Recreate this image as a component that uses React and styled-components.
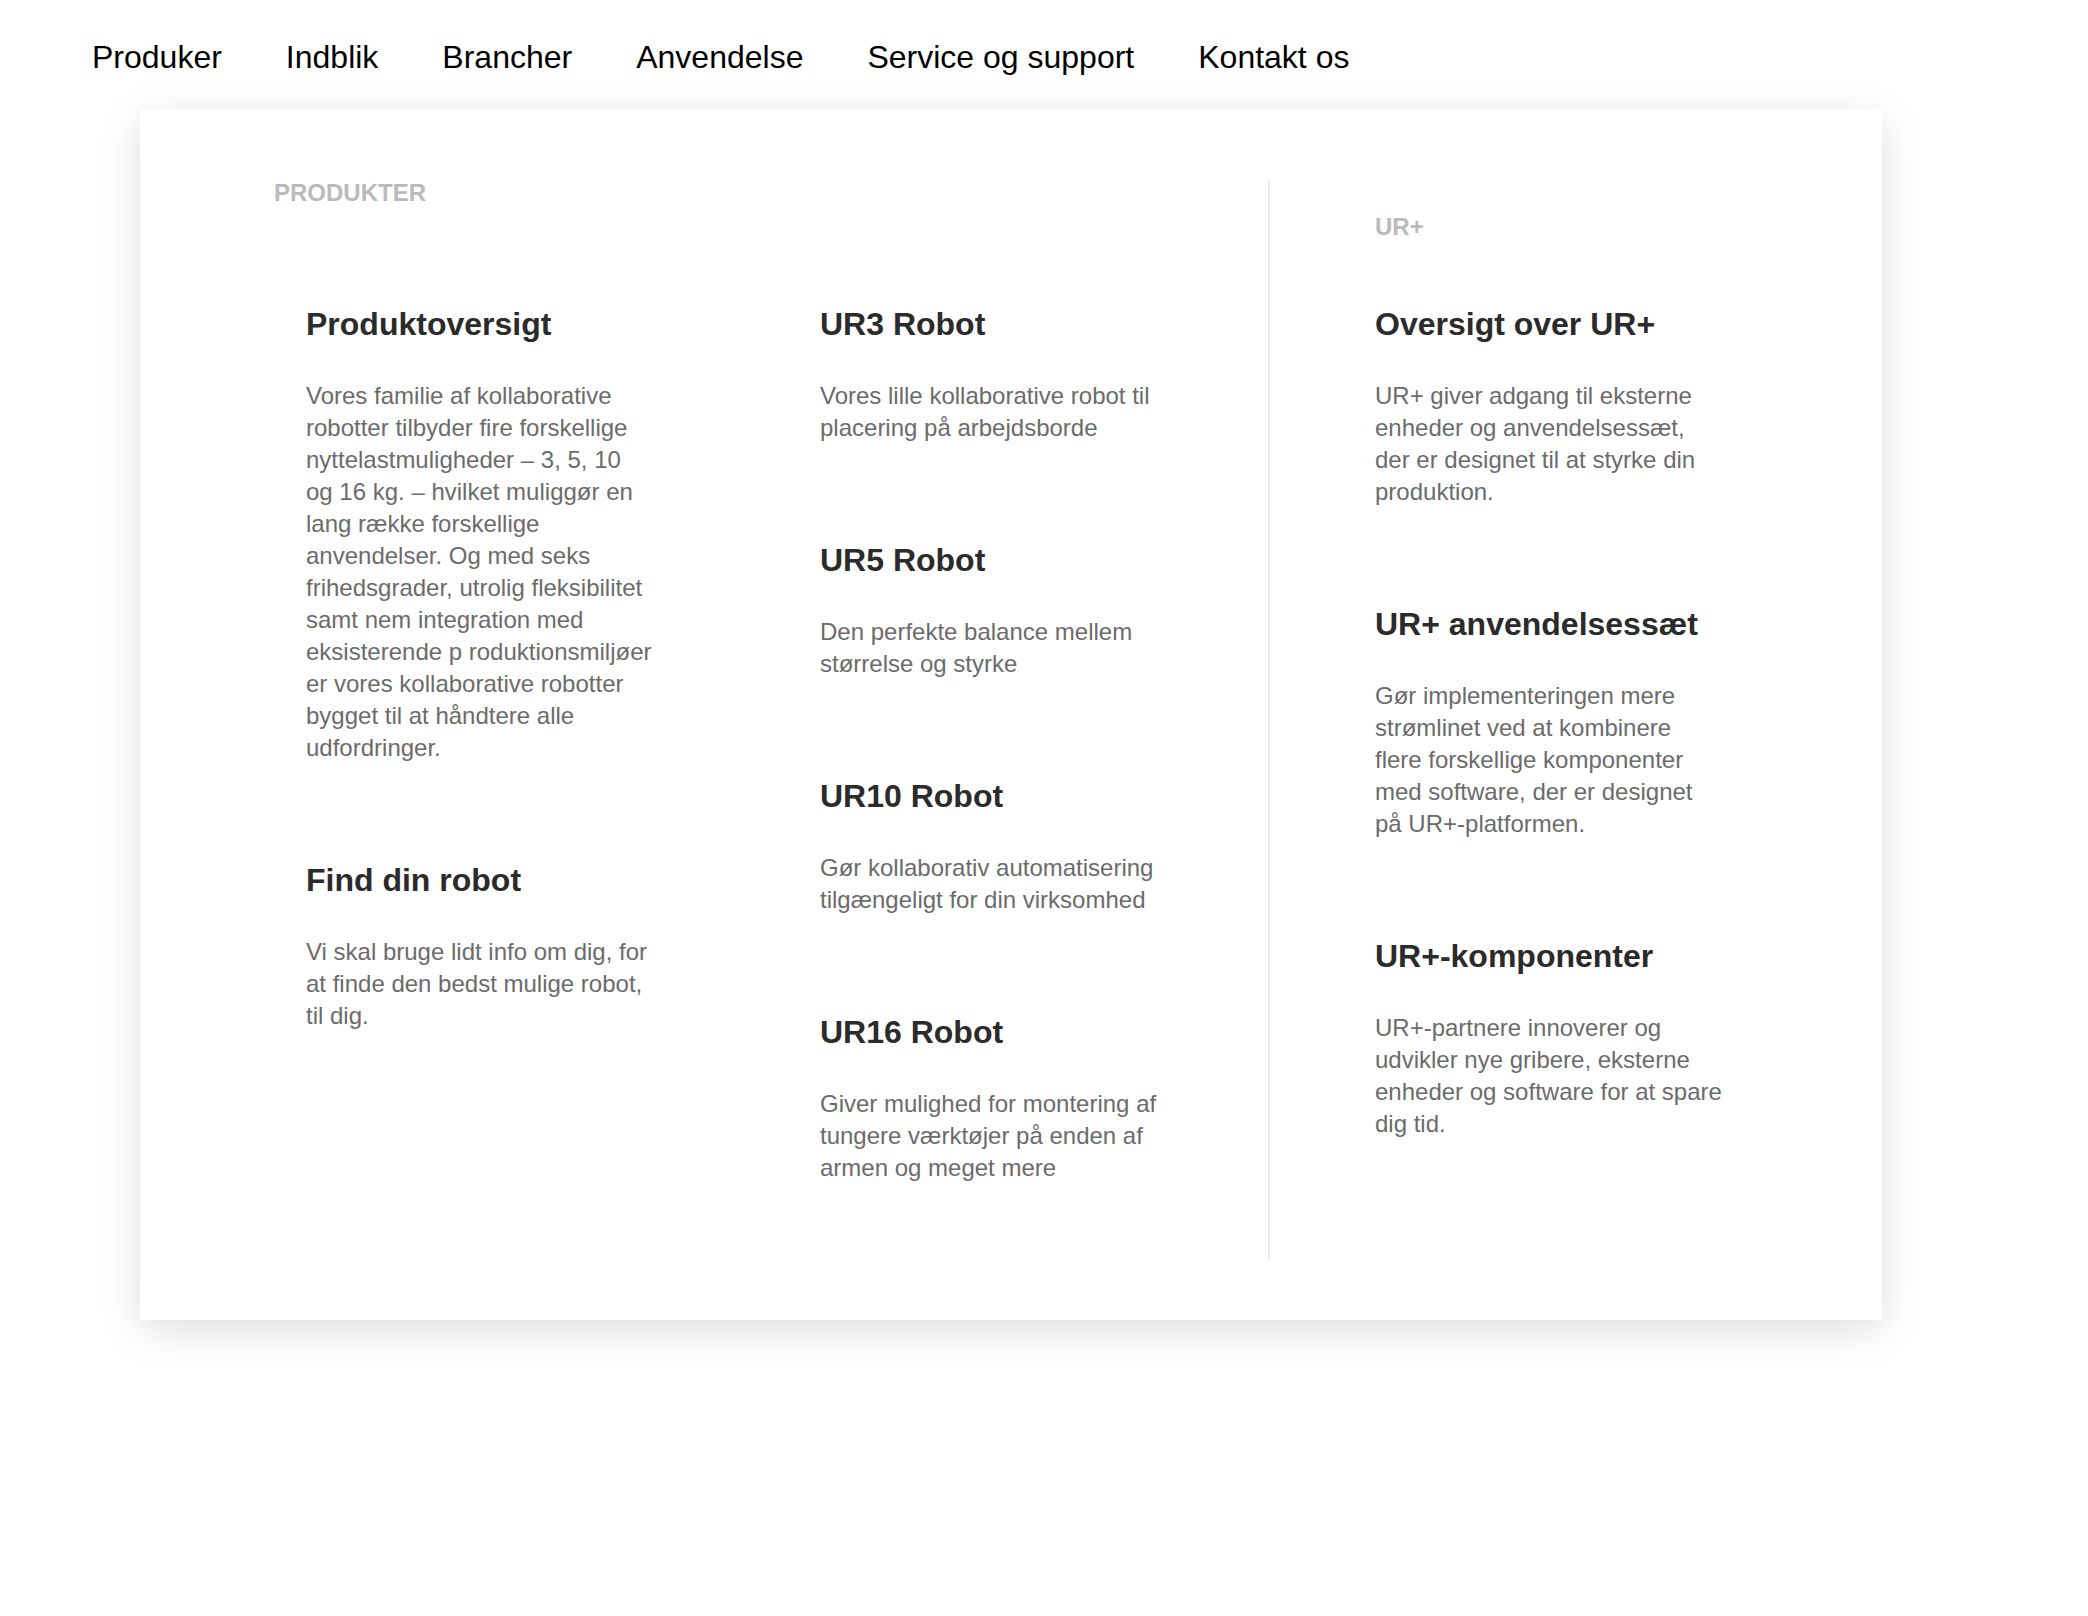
import React from "react";
import styled, { createGlobalStyle } from "styled-components";

const GlobalStyle = createGlobalStyle`
  html, body {
    margin: 0;
    padding: 0;
    background: #ffffff;
  }
  body {
    font-family: "Liberation Sans", Arial, Helvetica, sans-serif;
  }
`;

const navItems = [
  "Produker",
  "Indblik",
  "Brancher",
  "Anvendelse",
  "Service og support",
  "Kontakt os",
];

// text is kept as the lines in the design, so wrapping matches the mockup
const columnOne = [
  {
    title: "Produktoversigt",
    lines: [
      "Vores familie af kollaborative",
      "robotter tilbyder fire forskellige",
      "nyttelastmuligheder – 3, 5, 10",
      "og 16 kg. – hvilket muliggør en",
      "lang række forskellige",
      "anvendelser. Og med seks",
      "frihedsgrader, utrolig fleksibilitet",
      "samt nem integration med",
      "eksisterende p roduktionsmiljøer",
      "er vores kollaborative robotter",
      "bygget til at håndtere alle",
      "udfordringer.",
    ],
  },
  {
    title: "Find din robot",
    lines: [
      "Vi skal bruge lidt info om dig, for",
      "at finde den bedst mulige robot,",
      "til dig.",
    ],
  },
];

const columnTwo = [
  {
    title: "UR3 Robot",
    lines: ["Vores lille kollaborative robot til", "placering på arbejdsborde"],
  },
  {
    title: "UR5 Robot",
    lines: ["Den perfekte balance mellem", "størrelse og styrke"],
  },
  {
    title: "UR10 Robot",
    lines: ["Gør kollaborativ automatisering", "tilgængeligt for din virksomhed"],
  },
  {
    title: "UR16 Robot",
    lines: [
      "Giver mulighed for montering af",
      "tungere værktøjer på enden af",
      "armen og meget mere",
    ],
  },
];

const columnThree = [
  {
    title: "Oversigt over UR+",
    lines: [
      "UR+ giver adgang til eksterne",
      "enheder og anvendelsessæt,",
      "der er designet til at styrke din",
      "produktion.",
    ],
  },
  {
    title: "UR+ anvendelsessæt",
    lines: [
      "Gør implementeringen mere",
      "strømlinet ved at kombinere",
      "flere forskellige komponenter",
      "med software, der er designet",
      "på UR+-platformen.",
    ],
  },
  {
    title: "UR+-komponenter",
    lines: [
      "UR+-partnere innoverer og",
      "udvikler nye gribere, eksterne",
      "enheder og software for at spare",
      "dig tid.",
    ],
  },
];

function MenuColumn({ items }) {
  return (
    <Column>
      {items.map((item) => (
        <Item key={item.title}>
          <ItemTitle>{item.title}</ItemTitle>
          <ItemText>
            {item.lines.map((line) => (
              <Line key={line}>{line}</Line>
            ))}
          </ItemText>
        </Item>
      ))}
    </Column>
  );
}

export default function App() {
  return (
    <Page>
      <GlobalStyle />
      <Nav>
        {navItems.map((label) => (
          <NavLink key={label}>{label}</NavLink>
        ))}
      </Nav>
      <Dropdown>
        <ProductsSection>
          <SectionLabel $top="0" $bottom="98px">
            PRODUKTER
          </SectionLabel>
          <ProductGrid>
            <MenuColumn items={columnOne} />
            <MenuColumn items={columnTwo} />
          </ProductGrid>
        </ProductsSection>
        <PlusSection>
          <SectionLabel $top="33px" $bottom="64px">
            UR+
          </SectionLabel>
          <MenuColumn items={columnThree} />
        </PlusSection>
      </Dropdown>
    </Page>
  );
}

const Page = styled.div`
  min-height: 1616px;
  background: #ffffff;
`;

const Nav = styled.nav`
  display: flex;
  gap: 64px;
  padding: 37px 0 0 92px;
`;

const NavLink = styled.a`
  font-size: 32px;
  line-height: 40px;
  color: #000000;
  text-decoration: none;
  white-space: nowrap;
  cursor: pointer;
`;

const Dropdown = styled.div`
  display: flex;
  width: 1742px;
  box-sizing: border-box;
  margin: 32px 0 0 140px;
  padding: 70px 0 60px 134px;
  background: #ffffff;
  box-shadow: 0 10px 40px rgba(0, 0, 0, 0.13);
`;

const ProductsSection = styled.section`
  width: 994px;
  flex-shrink: 0;
  padding-bottom: 76px;
`;

const PlusSection = styled.section`
  flex: 1;
  margin-top: 1px;
  padding-left: 105px;
  border-left: 2px solid #ededed;
`;

const SectionLabel = styled.div`
  margin: ${(p) => p.$top} 0 ${(p) => p.$bottom};
  font-size: 24px;
  line-height: 28px;
  font-weight: 700;
  color: #bababa;
`;

const ProductGrid = styled.div`
  display: grid;
  grid-template-columns: 514px 1fr;
  padding-left: 32px;
`;

const Column = styled.div`
  display: flex;
  flex-direction: column;
  gap: 97px;
`;

const Item = styled.div`
  display: flex;
  flex-direction: column;
  cursor: pointer;
`;

const ItemTitle = styled.h3`
  margin: 0 0 37px;
  font-size: 32px;
  line-height: 38px;
  font-weight: 700;
  color: #2b2b2b;
`;

const ItemText = styled.p`
  margin: 0;
  font-size: 24px;
  line-height: 32px;
  color: #6b6b6b;
`;

const Line = styled.span`
  display: block;
  white-space: nowrap;
`;
